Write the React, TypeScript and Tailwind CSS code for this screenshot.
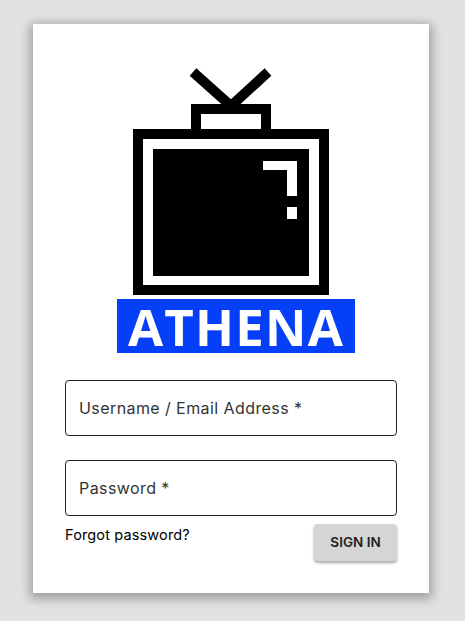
function TvLogo() {
  return (
    <svg width="196" height="231" viewBox="133 65 196 231" className="block">
      <path d="M193 72 L231 106 L268 72" fill="none" stroke="#000" strokeWidth="10" />
      <rect x="196" y="109" width="70" height="25" fill="#fff" stroke="#000" strokeWidth="10" />
      <rect x="133" y="129" width="196" height="166" fill="#000" />
      <rect x="143" y="139" width="176" height="146" fill="#fff" />
      <rect x="153" y="149" width="156" height="127" fill="#000" />
      <path d="M263 161 H297 V196 H287 V170 H263 Z" fill="#fff" />
      <rect x="287" y="207" width="10" height="12" fill="#fff" />
    </svg>
  );
}

function Field({ label }: { label: string }) {
  return (
    <div className="flex h-14 items-center rounded border border-[#222] px-[13px] text-[16px] tracking-[0.42px] text-[#333]">
      {label}
    </div>
  );
}

export default function App() {
  return (
    <div className="h-[621px] overflow-hidden bg-[#e2e2e2] pt-6 pl-[33px] font-['Inter','Open_Sans',sans-serif]">
      <div className="flex h-[569px] w-[396px] flex-col bg-white px-8 pt-[41px] shadow-[0_3px_10px_3px_rgba(0,0,0,0.3)]">
        <div className="flex flex-col items-center">
          <TvLogo />
          <div className="mt-[3px] ml-[10px] flex h-[54px] w-[238px] items-center justify-center bg-[#0540f8] font-['Open_Sans',sans-serif] text-[51px] leading-none font-bold tracking-[1.2px] text-white">
            ATHENA
          </div>
        </div>
        <div className="mt-[27px] flex flex-col gap-6">
          <Field label="Username / Email Address *" />
          <Field label="Password *" />
        </div>
        <div className="mt-2 flex items-start justify-between">
          <a className="pt-[1px] text-[14.5px] leading-5 tracking-[0.14px] text-black">Forgot password?</a>
          <button className="h-[37px] w-[83px] rounded bg-[#d5d5d5] text-[13.5px] font-semibold text-[#222] shadow-[0_2px_3px_rgba(0,0,0,0.35)]">
            SIGN IN
          </button>
        </div>
      </div>
    </div>
  );
}
